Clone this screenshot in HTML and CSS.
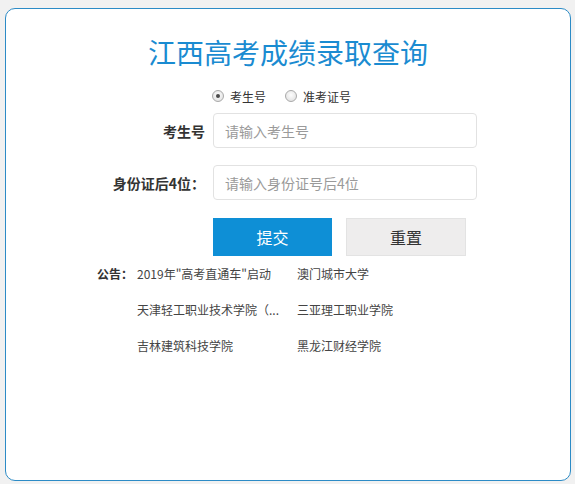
FILE: index.html
```html
<!DOCTYPE html>
<html lang="zh-CN">
<head>
<meta charset="utf-8">
<title>江西高考成绩录取查询</title>
<link rel="stylesheet" href="styles.css">
</head>
<body>
<div class="card">
  <h1 class="title">江西高考成绩录取查询</h1>
  <div class="radios">
    <label class="radio"><span class="dot checked"></span>考生号</label>
    <label class="radio"><span class="dot"></span>准考证号</label>
  </div>
  <div class="row">
    <div class="label">考生号</div>
    <input class="field" type="text" placeholder="请输入考生号">
  </div>
  <div class="row row2">
    <div class="label">身份证后4位：</div>
    <input class="field" type="text" placeholder="请输入身份证号后4位">
  </div>
  <div class="buttons">
    <button class="btn primary">提交</button>
    <button class="btn secondary">重置</button>
  </div>
  <div class="notice">
    <div class="notice-label">公告：</div>
    <ul class="notice-list">
      <li>2019年"高考直通车"启动</li>
      <li>澳门城市大学</li>
      <li>天津轻工职业技术学院（...</li>
      <li>三亚理工职业学院</li>
      <li>吉林建筑科技学院</li>
      <li>黑龙江财经学院</li>
    </ul>
  </div>
</div>
</body>
</html>
```

FILE: styles.css
```css
* { box-sizing: border-box; }
html, body { margin: 0; padding: 0; }
body {
  background: #f1f1f1;
  font-family: "Noto Sans CJK SC", "Noto Sans", sans-serif;
  color: #333;
}
.card {
  margin: 8px 5px 0 5px;
  width: 566px;
  height: 473px;
  background: #fff;
  border: 1px solid #2c8bc6;
  border-radius: 10px;
  padding-top: 23px;
}
.title {
  margin: 0;
  text-align: center;
  font-size: 28px;
  line-height: 40px;
  font-weight: normal;
  color: #1a8bd1;
}
.radios {
  display: flex;
  align-items: center;
  gap: 19px;
  margin: 14px 0 0 206px;
  height: 20px;
  font-size: 12px;
  color: #333;
}
.radio {
  display: flex;
  align-items: center;
  gap: 6px;
}
.dot {
  width: 12px;
  height: 12px;
  border-radius: 50%;
  border: 1px solid #a9a9a9;
  background: radial-gradient(circle at 50% 40%, #fdfdfd 0%, #e6e6e6 70%, #d6d6d6 100%);
  display: flex;
  align-items: center;
  justify-content: center;
}
.dot.checked::after {
  content: "";
  width: 4px;
  height: 4px;
  border-radius: 50%;
  background: #4a4a4a;
}
.row {
  display: flex;
  align-items: center;
  margin-top: 7px;
}
.row2 { margin-top: 17px; }
.label {
  width: 199px;
  margin-right: 8px;
  text-align: right;
  font-size: 14px;
  font-weight: bold;
  color: #333;
}
.field {
  width: 264px;
  height: 35px;
  border: 1px solid #e2e2e2;
  border-radius: 4px;
  padding: 0 11px;
  font-size: 14px;
  font-family: inherit;
  color: #333;
  outline: none;
}
.field::placeholder { color: #9a9a9a; }
.buttons {
  display: flex;
  gap: 14px;
  margin: 18px 0 0 207px;
}
.btn {
  height: 38px;
  font-size: 16px;
  font-family: inherit;
  border: none;
  padding: 0;
  cursor: pointer;
}
.primary {
  width: 119px;
  background: #0e8fd6;
  color: #fff;
}
.secondary {
  width: 120px;
  background: #eeeded;
  border: 1px solid #e3e3e3;
  color: #333;
}
.notice {
  display: flex;
  margin-left: 91px;
  font-size: 12px;
}
.notice-label {
  width: 40px;
  line-height: 36px;
  font-weight: bold;
  color: #333;
}
.notice-list {
  margin: 0;
  padding: 0;
  list-style: none;
  display: grid;
  grid-template-columns: 145px 145px;
  column-gap: 15px;
}
.notice-list li {
  line-height: 36px;
  color: #444;
  white-space: nowrap;
}
```
